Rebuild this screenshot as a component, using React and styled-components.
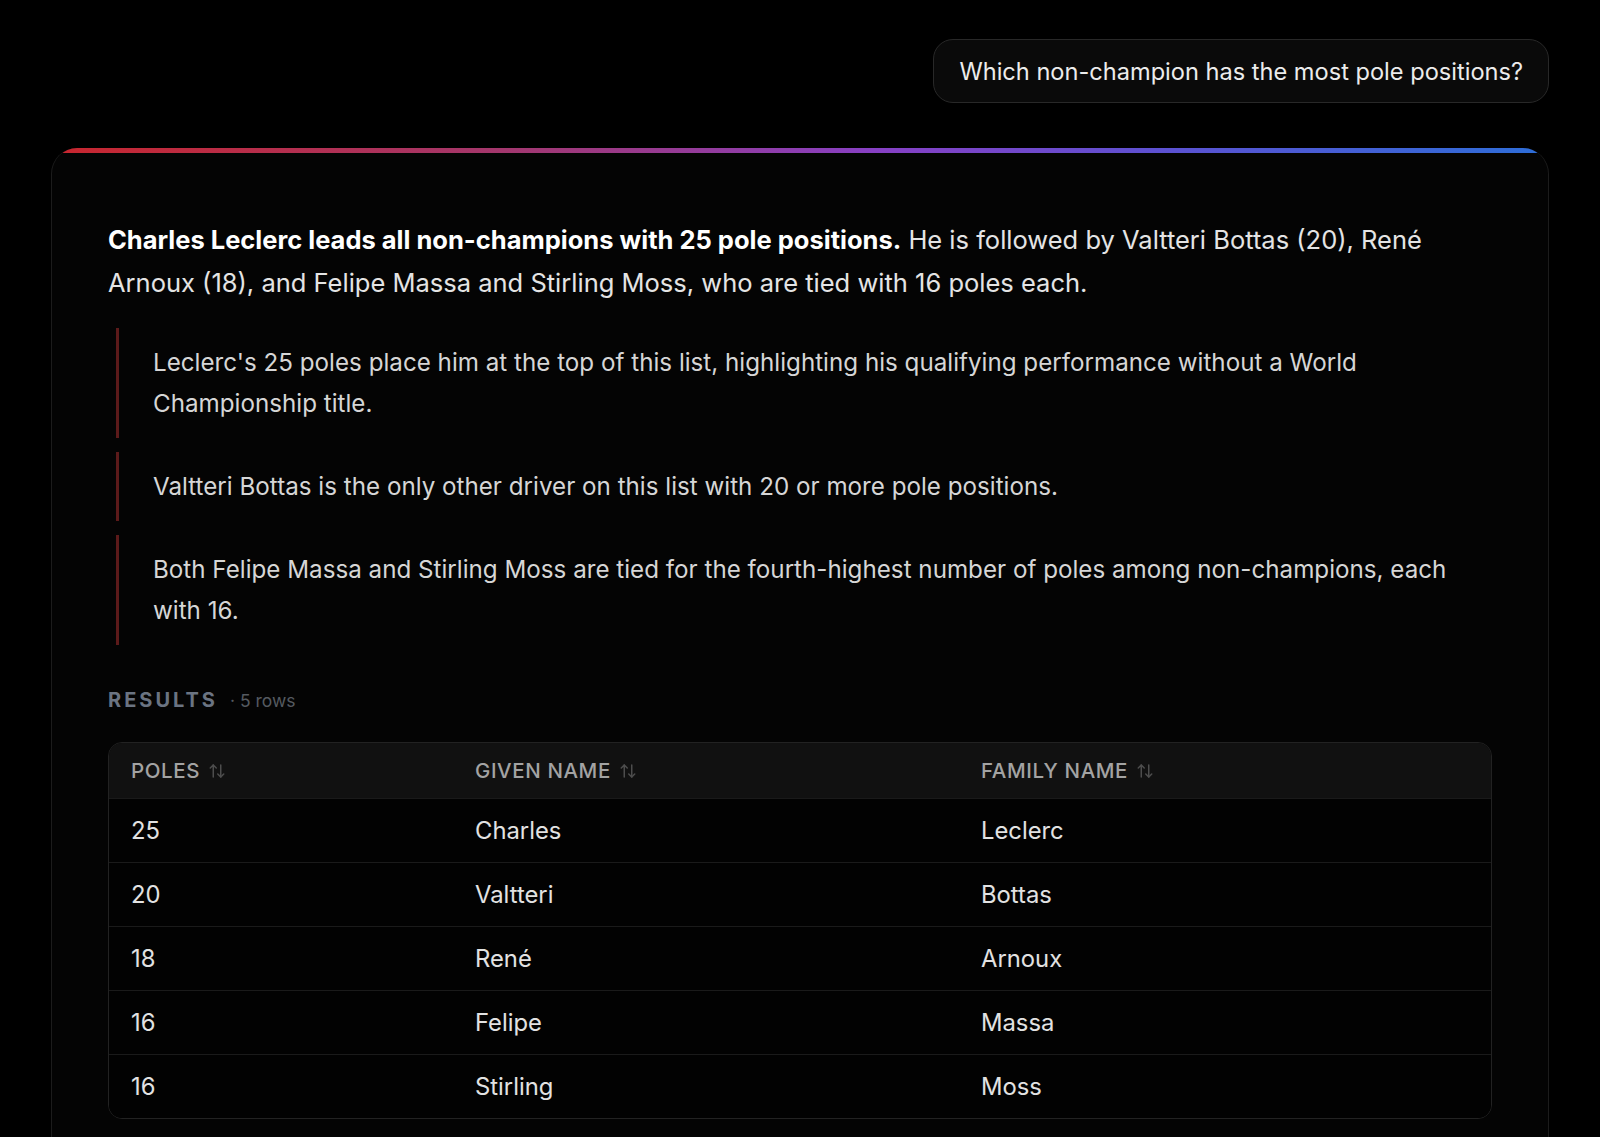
import React from 'react';
import styled, { createGlobalStyle } from 'styled-components';
import { ArrowUpDown } from 'lucide-react';

const GlobalStyle = createGlobalStyle`
  html, body {
    margin: 0;
    padding: 0;
    background: #000000;
  }
  body {
    font-family: Inter, "Noto Sans", "Liberation Sans", sans-serif;
    color: #e6e6e6;
    -webkit-font-smoothing: antialiased;
  }
`;

const Page = styled.div({
  display: 'flex',
  flexDirection: 'column',
  padding: '39px 51px 0 51px',
  minHeight: '100vh',
  boxSizing: 'border-box',
});

const UserRow = styled.div({
  display: 'flex',
  justifyContent: 'flex-end',
  marginBottom: 45,
});

const UserBubble = styled.div({
  boxSizing: 'border-box',
  height: 64,
  display: 'flex',
  alignItems: 'center',
  padding: '0 25px',
  borderRadius: 20,
  border: '1px solid #282828',
  background: '#0a0a0a',
  fontSize: 23.6,
  color: '#ececec',
});

const Card = styled.div({
  position: 'relative',
  borderRadius: 26,
  border: '1px solid #1c1c1c',
  borderTop: 'none',
  background: '#040404',
  padding: '70px 56px 60px 56px',
  overflow: 'hidden',
});

// thin brand stripe along the top edge of the answer card
const TopStripe = styled.div({
  position: 'absolute',
  top: 0,
  left: 0,
  right: 0,
  height: 5,
  background: 'linear-gradient(90deg, #c8262e 0%, #a3376d 30%, #8740c4 55%, #5b52d2 75%, #2d6ed8 100%)',
});

const Summary = styled.p({
  margin: 0,
  fontSize: 25.5,
  lineHeight: '43px',
  color: '#e4e4e4',
  '& strong': {
    fontWeight: 700,
    color: '#ffffff',
  },
});

const Notes = styled.div({
  display: 'flex',
  flexDirection: 'column',
  gap: 14,
  marginTop: 24,
  marginLeft: 8,
});

const Note = styled.blockquote({
  margin: 0,
  padding: '14px 0 14px 34px',
  borderLeft: '3px solid #5c1a1a',
  fontSize: 24.2,
  lineHeight: '41px',
  color: '#d6d6d6',
});

const ResultsHead = styled.div({
  display: 'flex',
  alignItems: 'baseline',
  gap: 12,
  marginTop: 43,
  marginBottom: 29,
  lineHeight: '24px',
});

const ResultsLabel = styled.span({
  fontSize: 20,
  fontWeight: 700,
  letterSpacing: '3px',
  color: '#6b7482',
});

const RowCount = styled.span({
  fontSize: 17.5,
  color: '#555a60',
});

const Table = styled.div({
  border: '1px solid #222',
  borderRadius: 14,
  overflow: 'hidden',
});

const Row = styled.div(({ head }) => ({
  display: 'grid',
  gridTemplateColumns: '344px 506px 1fr',
  alignItems: 'center',
  height: head ? 55 : 63,
  background: head ? '#111111' : '#020202',
  borderTop: head ? 'none' : '1px solid #1a1a1a',
}));

const HeadCell = styled.div({
  display: 'flex',
  alignItems: 'center',
  gap: 8,
  paddingLeft: 22,
  fontSize: 20.5,
  fontWeight: 500,
  letterSpacing: '0.6px',
  color: '#a3a3a3',
  textTransform: 'uppercase',
  '& svg': {
    color: '#4d4d4d',
  },
});

const Cell = styled.div({
  paddingLeft: 22,
  fontSize: 23.8,
  color: '#e2e2e2',
});

const columns = ['Poles', 'Given name', 'Family name'];

const rows = [
  ['25', 'Charles', 'Leclerc'],
  ['20', 'Valtteri', 'Bottas'],
  ['18', 'René', 'Arnoux'],
  ['16', 'Felipe', 'Massa'],
  ['16', 'Stirling', 'Moss'],
];

const notes = [
  "Leclerc's 25 poles place him at the top of this list, highlighting his qualifying performance without a World Championship title.",
  'Valtteri Bottas is the only other driver on this list with 20 or more pole positions.',
  'Both Felipe Massa and Stirling Moss are tied for the fourth-highest number of poles among non-champions, each with 16.',
];

const App = () => {
  return (
    <>
      <GlobalStyle />
      <Page>
        <UserRow>
          <UserBubble>Which non-champion has the most pole positions?</UserBubble>
        </UserRow>
        <Card>
          <TopStripe />
          <Summary>
            <strong>Charles Leclerc leads all non-champions with 25 pole positions.</strong> He is
            followed by Valtteri Bottas (20), René Arnoux (18), and Felipe Massa and Stirling Moss,
            who are tied with 16 poles each.
          </Summary>
          <Notes>
            {notes.map((n, i) => (
              <Note key={i}>{n}</Note>
            ))}
          </Notes>
          <ResultsHead>
            <ResultsLabel>RESULTS</ResultsLabel>
            <RowCount>· 5 rows</RowCount>
          </ResultsHead>
          <Table>
            <Row head>
              {columns.map((c) => (
                <HeadCell key={c}>
                  {c}
                  <ArrowUpDown size={18} strokeWidth={2} />
                </HeadCell>
              ))}
            </Row>
            {rows.map((r, i) => (
              <Row key={i}>
                {r.map((v, j) => (
                  <Cell key={j}>{v}</Cell>
                ))}
              </Row>
            ))}
          </Table>
        </Card>
      </Page>
    </>
  );
};

export default App;
